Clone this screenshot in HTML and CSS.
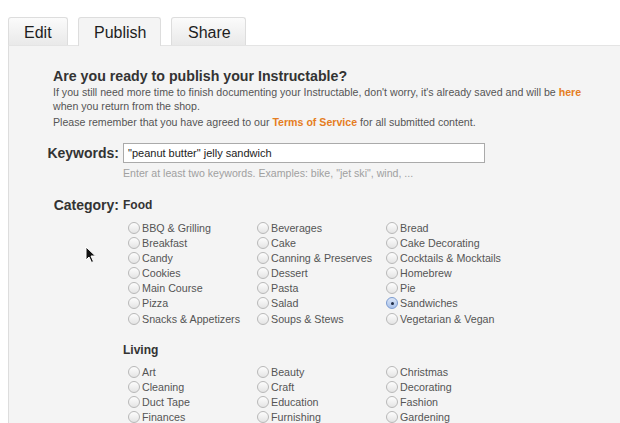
FILE: index.html
```html
<!DOCTYPE html>
<html>
<head>
<meta charset="utf-8">
<link rel="stylesheet" href="styles.css">
</head>
<body>
<div class="tabs">
  <div class="tab">Edit</div>
  <div class="tab active">Publish</div>
  <div class="tab">Share</div>
</div>
<div class="panel">
  <div class="intro">
    <h1>Are you ready to publish your Instructable?</h1>
    <p class="first">If you still need more time to finish documenting your Instructable, don't worry, it's already saved and will be <a>here</a><br>when you return from the shop.</p>
    <p class="second">Please remember that you have agreed to our <a>Terms of Service</a> for all submitted content.</p>
  </div>
  <div class="form">
    <div class="label kw">Keywords:</div>
    <div class="field">
      <div class="input">"peanut butter" jelly sandwich</div>
      <div class="hint">Enter at least two keywords. Examples: bike, "jet ski", wind, ...</div>
    </div>
    <div class="label cat">Category:</div>
    <div class="field cats">
      <div class="group">Food</div>
      <div class="grid">
        <div class="opt"><span class="radio"></span>BBQ &amp; Grilling</div>
        <div class="opt"><span class="radio"></span>Beverages</div>
        <div class="opt"><span class="radio"></span>Bread</div>
        <div class="opt"><span class="radio"></span>Breakfast</div>
        <div class="opt"><span class="radio"></span>Cake</div>
        <div class="opt"><span class="radio"></span>Cake Decorating</div>
        <div class="opt"><span class="radio"></span>Candy</div>
        <div class="opt"><span class="radio"></span>Canning &amp; Preserves</div>
        <div class="opt"><span class="radio"></span>Cocktails &amp; Mocktails</div>
        <div class="opt"><span class="radio"></span>Cookies</div>
        <div class="opt"><span class="radio"></span>Dessert</div>
        <div class="opt"><span class="radio"></span>Homebrew</div>
        <div class="opt"><span class="radio"></span>Main Course</div>
        <div class="opt"><span class="radio"></span>Pasta</div>
        <div class="opt"><span class="radio"></span>Pie</div>
        <div class="opt"><span class="radio"></span>Pizza</div>
        <div class="opt"><span class="radio"></span>Salad</div>
        <div class="opt"><span class="radio checked"></span>Sandwiches</div>
        <div class="opt"><span class="radio"></span>Snacks &amp; Appetizers</div>
        <div class="opt"><span class="radio"></span>Soups &amp; Stews</div>
        <div class="opt"><span class="radio"></span>Vegetarian &amp; Vegan</div>
      </div>
      <div class="group living">Living</div>
      <div class="grid grid-living">
        <div class="opt"><span class="radio"></span>Art</div>
        <div class="opt"><span class="radio"></span>Beauty</div>
        <div class="opt"><span class="radio"></span>Christmas</div>
        <div class="opt"><span class="radio"></span>Cleaning</div>
        <div class="opt"><span class="radio"></span>Craft</div>
        <div class="opt"><span class="radio"></span>Decorating</div>
        <div class="opt"><span class="radio"></span>Duct Tape</div>
        <div class="opt"><span class="radio"></span>Education</div>
        <div class="opt"><span class="radio"></span>Fashion</div>
        <div class="opt"><span class="radio"></span>Finances</div>
        <div class="opt"><span class="radio"></span>Furnishing</div>
        <div class="opt"><span class="radio"></span>Gardening</div>
      </div>
    </div>
  </div>
</div>
<svg class="cursor" width="12" height="18" viewBox="0 0 12 18"><path d="M1 1 L1 14 L4 11 L6.5 16.5 L8.5 15.5 L6 10 L10.5 10 Z" fill="#111" stroke="#fff" stroke-width="1"/></svg>
</body>
</html>
```
FILE: styles.css
```css
html, body {
  margin: 0;
  padding: 0;
  background: #fff;
  font-family: "Liberation Sans", Arial, sans-serif;
  color: #555;
  overflow: hidden;
}
.tabs {
  display: flex;
  gap: 10px;
  padding: 17px 0 0 8px;
  height: 28px;
}
.tab {
  height: 28px;
  padding: 0 15px;
  box-sizing: border-box;
  border: 1px solid #ddd;
  border-bottom: none;
  border-radius: 3px 3px 0 0;
  background: linear-gradient(#fbfbfb, #e9e9e9);
  font-size: 16px;
  line-height: 29px;
  color: #1e1e1e;
}
.tab.active {
  background: #f4f4f4;
  height: 29px;
  position: relative;
  z-index: 1;
}
.tabs .tab:nth-child(1) { width: 60px; }
.tabs .tab:nth-child(2) { width: 83px; }
.tabs .tab:nth-child(3) { width: 75px; padding-left: 16px; }
.panel {
  margin-left: 8px;
  border-left: 1px solid #ddd;
  border-top: 1px solid #e4e4e4;
  background: #f4f4f4;
  height: 400px;
}
.intro {
  padding: 22px 0 0 44px;
}
h1 {
  margin: 0;
  font-size: 14.2px;
  line-height: 16px;
  color: #333;
  font-weight: bold;
}
p {
  margin: 0;
  font-size: 10.62px;
  color: #555;
}
p.first { line-height: 14px; margin-top: 1px; }
p.second { line-height: 14px; margin-top: 2px; }
a { color: #e57d22; font-weight: bold; }
.form {
  display: grid;
  grid-template-columns: 110px 1fr;
  column-gap: 4px;
  margin-top: 14px;
}
.label {
  text-align: right;
  font-weight: bold;
  color: #333;
}
.label.kw { font-size: 14px; line-height: 20px; }
.label.cat { font-size: 14px; line-height: 16px; margin-top: 17px; }
.input {
  width: 362px;
  height: 20px;
  box-sizing: border-box;
  border: 1px solid #aaa;
  background: #fff;
  font-size: 11px;
  line-height: 18px;
  padding-left: 4px;
  color: #222;
}
.hint {
  font-size: 10.6px;
  color: #a0a0a0;
  margin-top: 3px;
  line-height: 14px;
}
.cats { margin-top: 17px; }
.group {
  font-size: 12px;
  font-weight: bold;
  color: #333;
  line-height: 16px;
}
.group.living { margin-top: 16px; }
.grid {
  display: grid;
  grid-template-columns: 129px 129px 129px;
  grid-auto-rows: 15.17px;
  padding-left: 5px;
  margin-top: 7px;
}
.grid.grid-living { margin-top: 6px; }
.opt {
  display: flex;
  align-items: center;
  gap: 2px;
  font-size: 10.7px;
  color: #555;
  white-space: nowrap;
}
.radio {
  width: 12px;
  height: 12px;
  box-sizing: border-box;
  border-radius: 50%;
  border: 1px solid #b8b8b8;
  background: linear-gradient(#fdfdfd, #e4e4e4);
  flex: none;
  position: relative;
}
.radio.checked {
  border-color: #7a9ad0;
  background: linear-gradient(#dbe6f7, #a9c1e9);
}
.radio.checked::after {
  content: "";
  position: absolute;
  left: 3.5px;
  top: 3.5px;
  width: 3px;
  height: 3px;
  border-radius: 50%;
  background: #1d2a45;
}
.cursor {
  position: absolute;
  left: 85px;
  top: 246px;
}
```
